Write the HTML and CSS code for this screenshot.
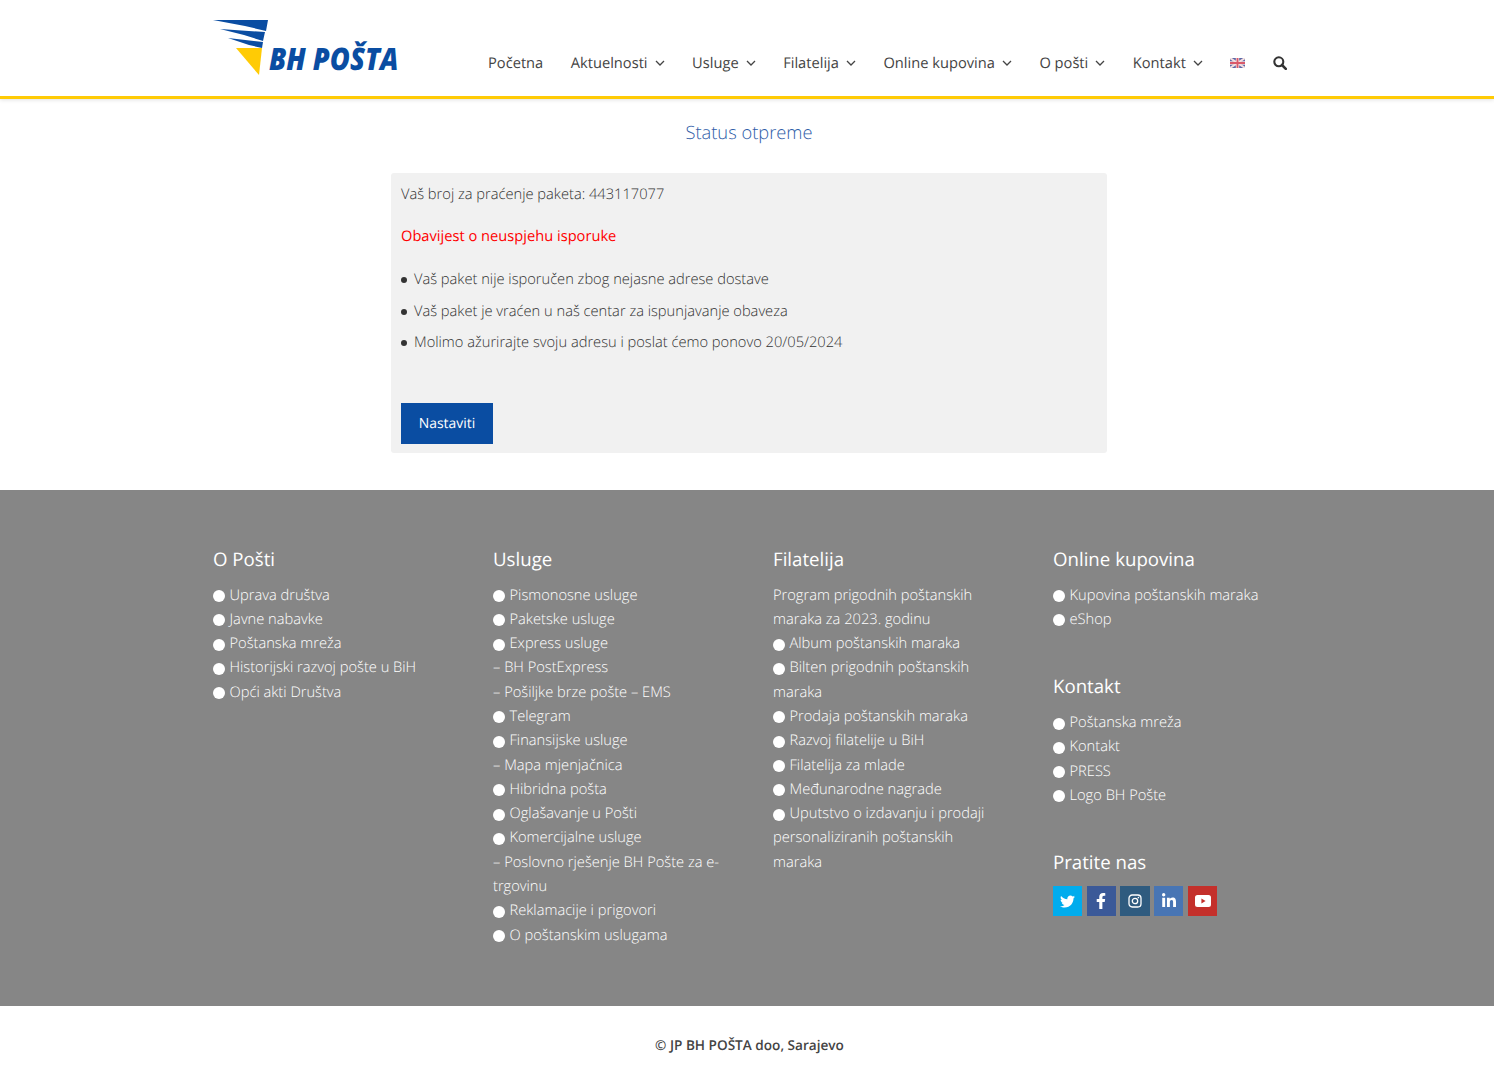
FILE: index.html
```html
<!DOCTYPE html>
<html lang="bs">

<head>
    <meta charset="UTF-8">
    <meta name="viewport" content="width=device-width, initial-scale=1.0">
    <title>Status otpreme</title>
    <link rel="stylesheet" href="styles.css">
</head>

<body>
    <header class="header">
        <div class="wrap header-in">
            <a class="logo" href="#">
                <svg class="logo-wing" viewBox="0 0 56 56" width="56" height="56">
                    <polygon fill="#0a4da2" points="0,0 55,0 53,11 32,6" />
                    <polygon fill="#0a4da2" points="7,9 52,12 50,21 31,15" />
                    <polygon fill="#0a4da2" points="15,18 50,22 49,28 36,25" />
                    <polygon fill="#ffcb05" points="23,28 49,28 46,55" />
                </svg>
                <span class="logo-text">BH POŠTA</span>
            </a>
            <nav class="nav">
                <a href="#">Početna</a>
                <a href="#">Aktuelnosti<svg class="caret" viewBox="0 0 10 6"><path d="M1 1l4 4 4-4" /></svg></a>
                <a href="#">Usluge<svg class="caret" viewBox="0 0 10 6"><path d="M1 1l4 4 4-4" /></svg></a>
                <a href="#">Filatelija<svg class="caret" viewBox="0 0 10 6"><path d="M1 1l4 4 4-4" /></svg></a>
                <a href="#">Online kupovina<svg class="caret" viewBox="0 0 10 6"><path d="M1 1l4 4 4-4" /></svg></a>
                <a href="#">O pošti<svg class="caret" viewBox="0 0 10 6"><path d="M1 1l4 4 4-4" /></svg></a>
                <a href="#">Kontakt<svg class="caret" viewBox="0 0 10 6"><path d="M1 1l4 4 4-4" /></svg></a>
                <a href="#" class="flag">
                    <svg viewBox="0 0 15 10" width="15" height="10">
                        <rect width="15" height="10" fill="#5a67a8" />
                        <path d="M0 0l15 10M15 0L0 10" stroke="#f3dede" stroke-width="2" />
                        <path d="M7.500 0v10M0 5h15" stroke="#f3dede" stroke-width="3.400" />
                        <path d="M7.500 0v10M0 5h15" stroke="#d9596a" stroke-width="1.800" />
                    </svg>
                </a>
                <a href="#" class="search">
                    <svg viewBox="0 0 14 14" width="14" height="14">
                        <circle cx="5.800" cy="5.800" r="4.500" fill="none" stroke="#333" stroke-width="2.100" />
                        <path d="M9 9l3.800 3.800" stroke="#333" stroke-width="2.600" stroke-linecap="round" />
                    </svg>
                </a>
            </nav>
        </div>
    </header>

    <main class="main">
        <h2 class="page-title">Status otpreme</h2>
        <div class="status-box">
            <p class="track">Vaš broj za praćenje paketa: 443117077</p>
            <p class="notice">Obavijest o neuspjehu isporuke</p>
            <ul class="reasons">
                <li>Vaš paket nije isporučen zbog nejasne adrese dostave</li>
                <li>Vaš paket je vraćen u naš centar za ispunjavanje obaveza</li>
                <li>Molimo ažurirajte svoju adresu i poslat ćemo ponovo 20/05/2024</li>
            </ul>
            <a class="btn" href="#">Nastaviti</a>
        </div>
    </main>

    <footer class="footer">
        <div class="wrap footer-grid">
            <div class="col">
                <h3>O Pošti</h3>
                <ul>
                    <li class="dot">Uprava društva</li>
                    <li class="dot">Javne nabavke</li>
                    <li class="dot">Poštanska mreža</li>
                    <li class="dot">Historijski razvoj pošte u BiH</li>
                    <li class="dot">Opći akti Društva</li>
                </ul>
            </div>
            <div class="col">
                <h3>Usluge</h3>
                <ul>
                    <li class="dot">Pismonosne usluge</li>
                    <li class="dot">Paketske usluge</li>
                    <li class="dot">Express usluge</li>
                    <li>– BH PostExpress</li>
                    <li>– Pošiljke brze pošte – EMS</li>
                    <li class="dot">Telegram</li>
                    <li class="dot">Finansijske usluge</li>
                    <li>– Mapa mjenjačnica</li>
                    <li class="dot">Hibridna pošta</li>
                    <li class="dot">Oglašavanje u Pošti</li>
                    <li class="dot">Komercijalne usluge</li>
                    <li>– Poslovno rješenje BH Pošte za e-trgovinu</li>
                    <li class="dot">Reklamacije i prigovori</li>
                    <li class="dot">O poštanskim uslugama</li>
                </ul>
            </div>
            <div class="col">
                <h3>Filatelija</h3>
                <ul>
                    <li>Program prigodnih poštanskih maraka za 2023. godinu</li>
                    <li class="dot">Album poštanskih maraka</li>
                    <li class="dot">Bilten prigodnih poštanskih maraka</li>
                    <li class="dot">Prodaja poštanskih maraka</li>
                    <li class="dot">Razvoj filatelije u BiH</li>
                    <li class="dot">Filatelija za mlade</li>
                    <li class="dot">Međunarodne nagrade</li>
                    <li class="dot">Uputstvo o izdavanju i prodaji personaliziranih poštanskih maraka</li>
                </ul>
            </div>
            <div class="col">
                <h3>Online kupovina</h3>
                <ul>
                    <li class="dot">Kupovina poštanskih maraka</li>
                    <li class="dot">eShop</li>
                </ul>
                <h3 class="next">Kontakt</h3>
                <ul>
                    <li class="dot">Poštanska mreža</li>
                    <li class="dot">Kontakt</li>
                    <li class="dot">PRESS</li>
                    <li class="dot">Logo BH Pošte</li>
                </ul>
                <h3 class="next">Pratite nas</h3>
                <div class="social">
                    <a href="#" class="tw"><svg viewBox="0 0 512 512" width="15" height="15"><path d="M459.37 151.716c.325 4.548.325 9.097.325 13.645 0 138.72-105.583 298.558-298.558 298.558-59.452 0-114.68-17.219-161.137-47.106 8.447.974 16.568 1.299 25.34 1.299 49.055 0 94.213-16.568 130.274-44.832-46.132-.975-84.792-31.188-98.112-72.772 6.498.974 12.995 1.624 19.818 1.624 9.421 0 18.843-1.3 27.614-3.573-48.081-9.747-84.143-51.98-84.143-102.985v-1.299c13.969 7.797 30.214 12.67 47.431 13.319-28.264-18.843-46.781-51.005-46.781-87.391 0-19.492 5.197-37.36 14.294-52.954 51.655 63.675 129.3 105.258 216.365 109.807-1.624-7.797-2.599-15.918-2.599-24.04 0-57.828 46.782-104.934 104.934-104.934 30.213 0 57.502 12.67 76.67 33.137 23.715-4.548 46.456-13.32 66.599-25.34-7.798 24.366-24.366 44.833-46.132 57.827 21.117-2.273 41.584-8.122 60.426-16.243-14.292 20.791-32.161 39.308-52.628 54.253z" /></svg></a>
                    <a href="#" class="fb"><svg viewBox="0 0 320 512" width="10" height="16"><path d="M279.14 288l14.22-92.66h-88.91v-60.13c0-25.35 12.42-50.06 52.24-50.06h40.42V6.26S260.43 0 225.36 0c-73.22 0-121.08 44.38-121.08 124.72v70.62H22.89V288h81.39v224h100.17V288z" /></svg></a>
                    <a href="#" class="ig"><svg viewBox="0 0 14 14" width="14" height="14"><rect x="1" y="1" width="12" height="12" rx="3.200" fill="none" stroke="#fff" stroke-width="1.300" /><circle cx="7" cy="7" r="2.700" fill="none" stroke="#fff" stroke-width="1.300" /><circle cx="10.400" cy="3.600" r=".8" /></svg></a>
                    <a href="#" class="in"><svg viewBox="0 0 448 512" width="14" height="16"><path d="M100.28 448H7.4V148.9h92.88zM53.79 108.1C24.09 108.1 0 83.5 0 53.8a53.79 53.79 0 0 1 107.58 0c0 29.7-24.1 54.3-53.79 54.3zM447.9 448h-92.68V302.4c0-34.7-.7-79.2-48.29-79.2-48.29 0-55.69 37.7-55.69 76.7V448h-92.78V148.9h89.08v40.8h1.3c12.4-23.5 42.69-48.3 87.88-48.3 94 0 111.28 61.9 111.28 142.3V448z" /></svg></a>
                    <a href="#" class="yt"><svg viewBox="0 0 16 12" width="16" height="12"><path fill-rule="evenodd" d="M2.500 0h11A2.500 2.500 0 0 1 16 2.500v7a2.500 2.500 0 0 1-2.500 2.500h-11A2.500 2.500 0 0 1 0 9.500v-7A2.500 2.500 0 0 1 2.500 0zM6.400 3.500v5L10.600 6z" /></svg></a>
                </div>
            </div>
        </div>
    </footer>

    <div class="copy">© JP BH POŠTA doo, Sarajevo</div>
</body>

</html>
```

FILE: styles.css
```css
* {
    margin: 0;
    padding: 0;
    box-sizing: border-box;
}

body {
    font-family: "Open Sans", "Liberation Sans", sans-serif;
    font-size: 14.667px;
    color: #444;
    background-color: #fff;
    text-rendering: geometricPrecision;
}

a {
    color: inherit;
    text-decoration: none;
}

ul {
    list-style: none;
}

.wrap {
    width: 1073px;
    margin-left: 213px;
}

/* header */
.header {
    height: 99px;
    border-bottom: 3px solid #ffcb05;
    box-shadow: 0 1px 4px rgba(0, 0, 0, .12);
}

.header-in {
    display: flex;
    height: 96px;
}

.logo {
    display: flex;
    width: 275px;
    padding-top: 20px;
    flex-shrink: 0;
}

.logo-wing {
    flex-shrink: 0;
}

.logo-text {
    display: block;
    margin-top: 19px;
    font-size: 31px;
    line-height: 40px;
    font-weight: 800;
    font-style: italic;
    color: #0a4da2;
    white-space: nowrap;
    transform: scaleX(.88);
    transform-origin: left center;
}

.nav {
    display: flex;
    align-items: center;
    gap: 27.500px;
    padding-top: 30px;
    color: #444;
}

.nav a {
    display: flex;
    align-items: center;
    white-space: nowrap;
}

.caret {
    width: 10px;
    height: 6px;
    margin-left: 7px;
    fill: none;
    stroke: #444;
    stroke-width: 1.300;
}

/* status */
.main {
    height: 391px;
    padding-top: 24px;
    padding-left: 391px;
}

.page-title {
    width: 716px;
    font-size: 18.300px;
    line-height: 20px;
    font-weight: 300;
    text-align: center;
    color: #2f5da8;
}

.status-box {
    width: 716px;
    height: 280px;
    margin-top: 30px;
    padding: 9px 10px 10px;
    border-radius: 3px;
    background-color: #f1f1f1;
}

.track {
    font-weight: 300;
    line-height: 24px;
    color: #333;
}

.notice {
    margin-top: 18px;
    line-height: 24px;
    color: #f00;
}

.reasons {
    margin-top: 19px;
    font-weight: 300;
    color: #333;
}

.reasons li {
    position: relative;
    padding-left: 13px;
    margin-bottom: 7.500px;
    line-height: 24px;
}

.reasons li::before {
    content: "";
    position: absolute;
    left: 0;
    top: 10px;
    width: 6px;
    height: 6px;
    border-radius: 50%;
    background-color: #333;
}

.btn {
    display: block;
    width: 92px;
    height: 41px;
    margin-top: 49px;
    font-size: 13.900px;
    line-height: 41px;
    text-align: center;
    color: #fff;
    background-color: #0a4da2;
}

/* footer */
.footer {
    height: 516px;
    padding-top: 54.500px;
    color: #fff;
    background-color: #868686;
}

.footer-grid {
    display: grid;
    grid-template-columns: repeat(4, 233px);
    column-gap: 47px;
}

.col h3 {
    font-size: 18.667px;
    line-height: 30px;
    font-weight: 400;
    margin-bottom: 8px;
}

.col h3.next {
    margin-top: 41px;
}

.col li {
    line-height: 24.300px;
    font-weight: 300;
}

.dot::before {
    content: "";
    display: inline-block;
    width: 12px;
    height: 12px;
    margin-right: 4.500px;
    border-radius: 50%;
    background-color: #fff;
    vertical-align: -2.500px;
}

.social {
    display: flex;
    gap: 4.400px;
}

.social a {
    display: flex;
    align-items: center;
    justify-content: center;
    width: 29.333px;
    height: 30px;
    fill: #fff;
}

.tw {
    background-color: #00aced;
}

.fb {
    background-color: #3b5998;
}

.ig {
    background-color: #2f5b7f;
}

.in {
    background-color: #4875b4;
}

.yt {
    background-color: #c4302b;
}

.copy {
    height: 74px;
    padding-top: 29px;
    padding-left: 5px;
    font-size: 13.600px;
    line-height: 20px;
    font-weight: 600;
    text-align: center;
    color: #444;
}
```
